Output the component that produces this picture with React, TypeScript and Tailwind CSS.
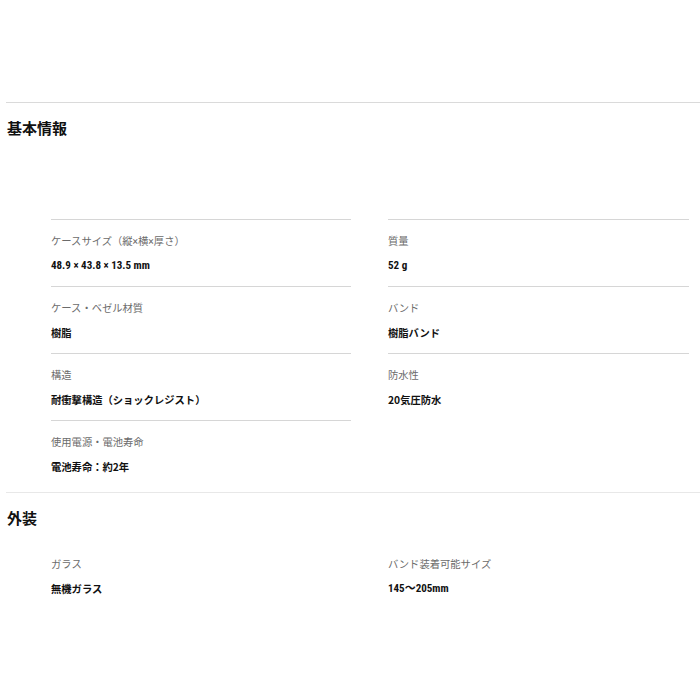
const font = { fontFamily: '"Noto Sans CJK JP", "Noto Sans", sans-serif' };
const labelFont = { fontFamily: 'Roboto, "Noto Sans CJK JP", sans-serif' };
const narrow = {
    fontFamily: '"Roboto Condensed", "Liberation Sans Narrow", "DejaVu Sans Condensed", "Noto Sans CJK JP", sans-serif'
};

type Spec = { label: string; value: string; latin?: boolean };

const SpecCell = ({ spec, border }: { spec?: Spec; border: boolean }) => (
    <div className={`pt-[14px] pb-[12px] ${border ? 'border-b border-[#d6d6d6]' : ''}`}>
        <div className="text-[10.3px] leading-[16px] h-[16px] text-[#6b6b6b]" style={labelFont}>
            {spec?.label}
        </div>
        <div
            className={`mt-[8px] leading-[16px] h-[16px] font-bold text-[#111] ${spec?.latin ? 'text-[11px]' : 'text-[10.3px]'}`}
            style={spec?.latin ? narrow : undefined}
        >
            {spec?.value}
        </div>
    </div>
);

const Section = ({
    title,
    rows,
    className = '',
    lineColor = 'border-[#dadada]'
}: {
    title: string;
    rows: [Spec | undefined, Spec | undefined][];
    className?: string;
    lineColor?: string;
}) => (
    <section className={`border-t ${lineColor} ${className}`}>
        <h2 className="pt-[15px] pl-[1px] text-[15px] leading-[20px] font-bold text-[#111]">{title}</h2>
        <div className="mt-[15px] ml-[45px] mr-[5px] grid grid-cols-[300px_301px] gap-x-[37px]">
            {rows.map(([l, r], i) => {
                // border only when another item follows in the same column
                const next = rows[i + 1];
                const leftBorder = !!next && (!!next[0] || i === 0);
                const rightBorder = !!next && !!next[1];
                return [
                    <SpecCell key={`l${i}`} spec={l} border={leftBorder} />,
                    <SpecCell key={`r${i}`} spec={r} border={rightBorder} />
                ];
            })}
        </div>
    </section>
);

export default function App() {
    return (
        <div className="w-[700px] h-[700px] bg-white overflow-hidden" style={font}>
            <div className="pt-[102px] pl-[6px]">
                <Section
                    title="基本情報"
                    className="pb-[5px]"
                    rows={[
                        [undefined, undefined],
                        [
                            { label: 'ケースサイズ（縦×横×厚さ）', value: '48.9 × 43.8 × 13.5 mm', latin: true },
                            { label: '質量', value: '52 g', latin: true }
                        ],
                        [
                            { label: 'ケース・ベゼル材質', value: '樹脂' },
                            { label: 'バンド', value: '樹脂バンド' }
                        ],
                        [
                            { label: '構造', value: '耐衝撃構造（ショックレジスト）' },
                            { label: '防水性', value: '20気圧防水' }
                        ],
                        [{ label: '使用電源・電池寿命', value: '電池寿命：約2年' }, undefined]
                    ]}
                />
                <Section
                    title="外装"
                    lineColor="border-[#e8e8e8]"
                    rows={[
                        [
                            { label: 'ガラス', value: '無機ガラス' },
                            { label: 'バンド装着可能サイズ', value: '145〜205mm', latin: true }
                        ]
                    ]}
                />
            </div>
        </div>
    );
}
